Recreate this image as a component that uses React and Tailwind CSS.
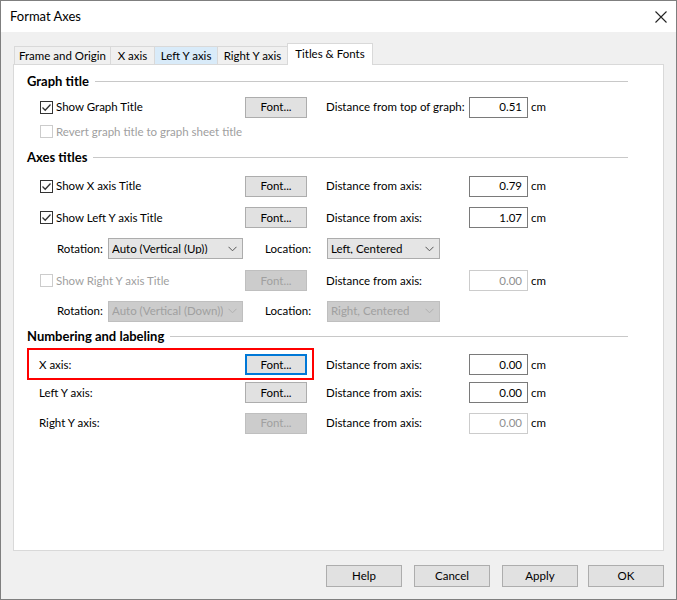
import React from "react";

function Check({ checked, disabled }) {
  return (
    <span
      className={
        disabled
          ? "w-[13px] h-[13px] border border-[#cccccc] bg-white flex items-center justify-center shrink-0"
          : "w-[13px] h-[13px] border border-[#333333] bg-white flex items-center justify-center shrink-0"
      }
    >
      {checked && (
        <svg width="11" height="11" viewBox="0 0 11 11">
          <path d="M1.5 5.5 L4.2 8.2 L9.5 2.5" fill="none" stroke="#333333" strokeWidth="1.3" />
        </svg>
      )}
    </span>
  );
}

function FontBtn({ disabled, focused }) {
  if (disabled)
    return (
      <div className="w-[62px] h-[21px] shrink-0 flex items-center justify-center border border-[#bfbfbf] bg-[#cccccc] text-[#a0a0a0]">
        Font...
      </div>
    );
  if (focused)
    return (
      <div className="w-[62px] h-[21px] shrink-0 flex items-center justify-center border-2 border-[#0078d7] bg-[#e1e1e1]">
        Font...
      </div>
    );
  return (
    <div className="w-[62px] h-[21px] shrink-0 flex items-center justify-center border border-[#adadad] bg-[#e1e1e1]">
      Font...
    </div>
  );
}

function NumInput({ value, disabled }) {
  return (
    <div
      className={
        disabled
          ? "w-[59px] h-[21px] shrink-0 flex items-center justify-end pr-[5px] border border-[#cccccc] bg-white text-[#8f8f8f]"
          : "w-[59px] h-[21px] shrink-0 flex items-center justify-end pr-[5px] border border-[#7a7a7a] bg-white"
      }
    >
      {value}
    </div>
  );
}

function Chevron({ color }) {
  return (
    <svg width="9" height="6" viewBox="0 0 9 6" className="shrink-0">
      <path d="M0.5 0.8 L4.5 4.8 L8.5 0.8" fill="none" stroke={color} strokeWidth="1" />
    </svg>
  );
}

function Select({ value, width, disabled }) {
  return (
    <div
      className={
        (disabled
          ? "border-[#bfbfbf] bg-[#cccccc] text-[#a0a0a0] "
          : "border-[#acacac] bg-[#e5e5e5] ") +
        "h-[21px] shrink-0 flex items-center justify-between pl-[3px] pr-[5px] border overflow-hidden " +
        width
      }
    >
      <span className="overflow-hidden">{value}</span>
      <Chevron color={disabled ? "#b0b0b0" : "#555555"} />
    </div>
  );
}

function Header({ title, cls }) {
  return (
    <div className={"flex items-center " + cls}>
      <span className="font-bold text-[13px]">{title}</span>
      <div className="flex-1 h-px bg-[#c8c8c8] ml-[6px]" />
    </div>
  );
}

function DistPart({ label, value, disabled }) {
  return (
    <>
      <span className="ml-[19px] w-[143px] shrink-0">{label}</span>
      <NumInput value={value} disabled={disabled} />
      <span className="ml-[3px]">cm</span>
    </>
  );
}

export default function App() {
  return (
    <div className="w-[677px] h-[600px] border border-[#7f7f7f] bg-[#f0f0f0] flex flex-col font-['Lato','Liberation_Sans',sans-serif] text-[11.5px] text-black leading-none whitespace-nowrap">
      {/* Title bar */}
      <div className="h-[31px] bg-white flex items-center justify-between pl-[9px] pr-[9px] shrink-0">
        <span className="text-[13px]">Format Axes</span>
        <svg width="12" height="12" viewBox="0 0 12 12">
          <path d="M0.5 0.5 L11.5 11.5 M11.5 0.5 L0.5 11.5" stroke="#222222" strokeWidth="1.1" />
        </svg>
      </div>

      <div className="pl-[12px] pr-[12px] pt-[11px] flex flex-col">
        {/* Tabs */}
        <div className="flex items-end h-[21px] pl-px">
          <div className="w-[96px] h-[18px] border-t border-l border-[#d9d9d9] bg-[#f0f0f0] flex items-center justify-center">
            Frame and Origin
          </div>
          <div className="w-[44px] h-[18px] border-t border-l border-[#d9d9d9] bg-[#f0f0f0] flex items-center justify-center">
            X axis
          </div>
          <div className="w-[63px] h-[18px] border-t border-l border-[#d9d9d9] bg-[#d9ebf9] flex items-center justify-center">
            Left Y axis
          </div>
          <div className="w-[70px] h-[18px] border-t border-l border-[#d9d9d9] bg-[#f0f0f0] flex items-center justify-center">
            Right Y axis
          </div>
          <div className="relative z-10 w-[86px] h-[22px] -mb-px border-t border-l border-r border-[#d9d9d9] bg-white flex items-center justify-center pb-[2px]">
            Titles &amp; Fonts
          </div>
        </div>

        {/* Panel */}
        <div className="w-[651px] h-[487px] border border-[#d9d9d9] bg-white pl-[13px] pr-[35px] pt-[3px] flex flex-col">
          <Header title="Graph title" cls="h-[26px]" />

          <div className="h-[26px] flex items-center">
            <div className="w-[218px] shrink-0 pl-[13px] flex items-center gap-[3px]">
              <Check checked />
              <span>Show Graph Title</span>
            </div>
            <FontBtn />
            <DistPart label="Distance from top of graph:" value="0.51" />
          </div>

          <div className="h-[23px] flex items-center">
            <div className="pl-[13px] flex items-center gap-[3px] text-[#a0a0a0]">
              <Check disabled />
              <span>Revert graph title to graph sheet title</span>
            </div>
          </div>

          <Header title="Axes titles" cls="h-[29px]" />

          <div className="h-[28px] flex items-center">
            <div className="w-[218px] shrink-0 pl-[13px] flex items-center gap-[3px]">
              <Check checked />
              <span>Show X axis Title</span>
            </div>
            <FontBtn />
            <DistPart label="Distance from axis:" value="0.79" />
          </div>

          <div className="h-[35px] flex items-center">
            <div className="w-[218px] shrink-0 pl-[13px] flex items-center gap-[3px]">
              <Check checked />
              <span>Show Left Y axis Title</span>
            </div>
            <FontBtn />
            <DistPart label="Distance from axis:" value="1.07" />
          </div>

          <div className="h-[27px] flex items-center">
            <span className="ml-[30px] w-[51px] shrink-0">Rotation:</span>
            <Select value="Auto (Vertical (Up))" width="w-[135px]" />
            <span className="ml-[22px] w-[62px] shrink-0">Location:</span>
            <Select value="Left, Centered" width="w-[113px]" />
          </div>

          <div className="h-[37px] flex items-center">
            <div className="w-[218px] shrink-0 pl-[13px] flex items-center gap-[3px] text-[#a0a0a0]">
              <Check disabled />
              <span>Show Right Y axis Title</span>
            </div>
            <FontBtn disabled />
            <DistPart label="Distance from axis:" value="0.00" disabled />
          </div>

          <div className="h-[24px] flex items-center">
            <span className="ml-[30px] w-[51px] shrink-0">Rotation:</span>
            <Select value="Auto (Vertical (Down))" width="w-[135px]" disabled />
            <span className="ml-[22px] w-[62px] shrink-0">Location:</span>
            <Select value="Right, Centered" width="w-[113px]" disabled />
          </div>

          <Header title="Numbering and labeling" cls="h-[27px]" />

          <div className="relative h-[29px] flex items-center">
            <span className="w-[218px] shrink-0 pl-[12px]">X axis:</span>
            <FontBtn focused />
            <DistPart label="Distance from axis:" value="0.00" />
            <div className="absolute left-0 top-[-2px] w-[287px] h-[32px] border-2 border-[#ff0000] pointer-events-none" />
          </div>

          <div className="h-[27px] flex items-center">
            <span className="w-[218px] shrink-0 pl-[12px]">Left Y axis:</span>
            <FontBtn />
            <DistPart label="Distance from axis:" value="0.00" />
          </div>

          <div className="h-[34px] flex items-center">
            <span className="w-[218px] shrink-0 pl-[12px]">Right Y axis:</span>
            <FontBtn disabled />
            <DistPart label="Distance from axis:" value="0.00" disabled />
          </div>
        </div>

        {/* Bottom buttons */}
        <div className="mt-[14px] flex justify-end">
          <div className="w-[76px] h-[22px] flex items-center justify-center border border-[#adadad] bg-[#e1e1e1]">
            Help
          </div>
          <div className="ml-[12px] w-[76px] h-[22px] flex items-center justify-center border border-[#adadad] bg-[#e1e1e1]">
            Cancel
          </div>
          <div className="ml-[12px] w-[76px] h-[22px] flex items-center justify-center border border-[#adadad] bg-[#e1e1e1]">
            Apply
          </div>
          <div className="ml-[10px] w-[76px] h-[22px] flex items-center justify-center border border-[#adadad] bg-[#e1e1e1]">
            OK
          </div>
        </div>
      </div>
    </div>
  );
}
